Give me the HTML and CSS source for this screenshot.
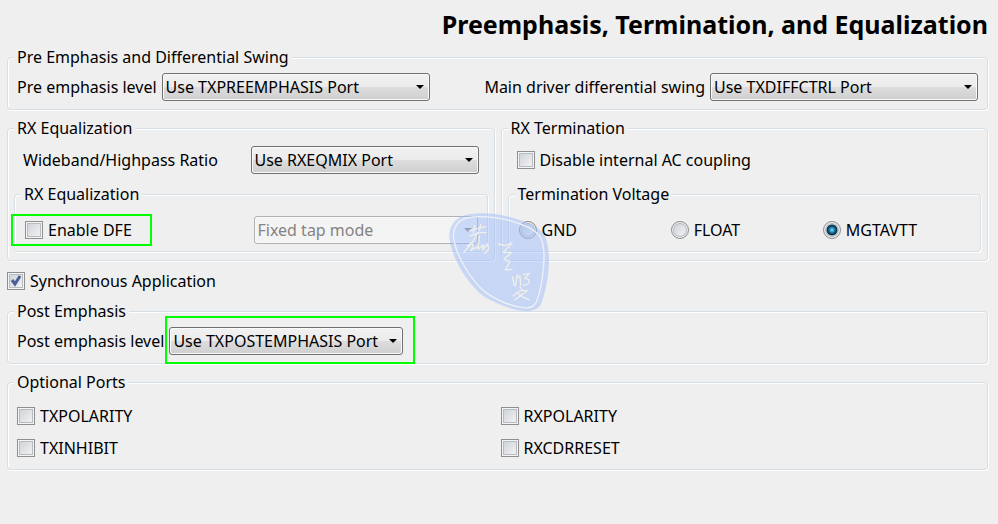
FILE: index.html
```html
<!DOCTYPE html>
<html lang="en">
<head>
  <meta charset="UTF-8" />
  <meta name="viewport" content="width=device-width, initial-scale=1.0"/>
  <title>Preemphasis, Termination, and Equalization</title>
  <link rel="stylesheet" href="styles.css">
</head>
<body>
  <form class="page">
    <h1>Preemphasis, Termination, and Equalization</h1>

    <fieldset>
      <legend>Pre Emphasis and Differential Swing</legend>
      <div class="row spread">
        <div class="field">
          <label for="preLevel">Pre emphasis level</label>
          <select id="preLevel" class="wide">
            <option>Use TXPREEMPHASIS Port</option>
          </select>
        </div>
        <div class="field">
          <label for="swing">Main driver differential swing</label>
          <select id="swing" class="wide">
            <option>Use TXDIFFCTRL Port</option>
          </select>
        </div>
      </div>
    </fieldset>

    <div class="columns">
      <fieldset class="outer">
        <legend>RX Equalization</legend>
        <div class="row spread inset">
          <label for="ratio">Wideband/Highpass Ratio</label>
          <select id="ratio" class="medium">
            <option>Use RXEQMIX Port</option>
          </select>
        </div>
        <fieldset class="inner">
          <legend>RX Equalization</legend>
          <div class="row spread">
            <label class="check marked"><input type="checkbox"> Enable DFE</label>
            <select class="narrow" aria-label="DFE mode" disabled>
              <option>Fixed tap mode</option>
            </select>
          </div>
        </fieldset>
      </fieldset>

      <fieldset class="outer">
        <legend>RX Termination</legend>
        <div class="row inset">
          <label class="check"><input type="checkbox"> Disable internal AC coupling</label>
        </div>
        <fieldset class="inner">
          <legend>Termination Voltage</legend>
          <div class="row radios">
            <label class="check"><input type="radio" name="voltage"> GND</label>
            <label class="check"><input type="radio" name="voltage"> FLOAT</label>
            <label class="check"><input type="radio" name="voltage" checked> MGTAVTT</label>
          </div>
        </fieldset>
      </fieldset>
    </div>

    <label class="check sync"><input type="checkbox" checked> Synchronous Application</label>

    <fieldset>
      <legend>Post Emphasis</legend>
      <div class="row">
        <div class="field">
          <label for="postLevel">Post emphasis level</label>
          <span class="marked-select">
            <select id="postLevel" class="post">
              <option>Use TXPOSTEMPHASIS Port</option>
            </select>
          </span>
        </div>
      </div>
    </fieldset>

    <fieldset>
      <legend>Optional Ports</legend>
      <div class="ports">
        <label class="check"><input type="checkbox"> TXPOLARITY</label>
        <label class="check"><input type="checkbox"> RXPOLARITY</label>
        <label class="check"><input type="checkbox"> TXINHIBIT</label>
        <label class="check"><input type="checkbox"> RXCDRRESET</label>
      </div>
    </fieldset>

    <!-- seal stamp -->
    <svg class="stamp" viewBox="0 0 420 375" aria-hidden="true">
      <path class="stamp-body" d="M58 108C58 80 74 56 98 48C130 36 190 38 235 50C270 58 310 72 335 94C352 112 357 150 357 185C355 235 345 280 333 312C325 330 302 335 280 333C240 328 195 310 160 288C110 250 60 165 58 108Z"/>
      <path class="stamp-line" d="M70 106C72 78 88 60 110 54C150 46 200 52 240 62C275 72 310 86 326 104C342 124 344 160 341 195C338 240 330 280 318 308C310 322 295 325 280 323C240 318 200 300 168 278C122 242 74 160 70 106Z"/>
      <g class="stamp-ink">
        <path d="M118 92L166 80M134 78L130 96M152 74L148 92M120 108L148 98L168 98M144 96C132 124 118 140 102 156M112 138L126 128L130 138L122 152L144 140M148 108L144 148L160 134L158 150L172 132L176 146L164 160"/>
        <path d="M205 132L225 137L246 129L220 157L244 158L222 178L240 184L226 210L246 208"/>
        <path d="M248 230L252 256M262 224L256 258M262 232L270 228L272 254M280 224L298 220L284 236C304 234 302 254 280 256M270 260L276 270M250 288C264 270 280 270 292 272C280 280 266 292 254 300M262 278C276 292 288 296 298 300"/>
      </g>
    </svg>
  </form>
</body>
</html>
```
FILE: styles.css
```css
body {
  margin: 0;
  background: #efefef;
  color: #000;
  font-family: "Noto Sans", Tahoma, sans-serif;
  font-size: 16px;
  line-height: 20px;
}
.page {
  position: relative;
  display: flex;
  flex-direction: column;
  gap: 8px;
  padding: 7px 10px 8px 7px;
}
h1 {
  margin: 0;
  font-size: 25px;
  line-height: 34px;
  height: 32px;
  text-align: right;
}
fieldset {
  min-width: 0;
  margin: 0;
  padding: 6px 6px 8px;
  border: 1px solid #d5dfe5;
  border-radius: 4px;
  box-shadow: inset 1px 1px 0 #fff, 1px 1px 0 #fff;
}
legend {
  padding: 0 3px;
  background: #efefef;
}
.columns {
  display: grid;
  grid-template-columns: 1fr 1fr;
  gap: 6px;
}
.outer {
  padding: 8px 6px 8px;
}
.inner {
  margin-top: 10px;
  padding: 12px 6px 7px;
}
.row {
  display: flex;
  align-items: center;
  min-height: 28px;
  padding: 0 3px;
}
.spread {
  justify-content: space-between;
}
.row.inset {
  padding: 0 9px;
}
.inner .row {
  padding: 0 3px 0 4px;
}
.field {
  display: flex;
  align-items: center;
  gap: 5px;
}
.radios {
  display: grid;
  grid-template-columns: 1fr 1fr 1fr;
  column-gap: 4px;
}
.ports {
  display: grid;
  grid-template-columns: 1fr 1fr;
  gap: 12px 6px;
  padding: 8px 3px 3px;
}
.check {
  display: flex;
  align-items: center;
  gap: 5px;
}
.sync {
  padding: 2px 0;
}

select {
  appearance: none;
  height: 28px;
  padding: 0 20px 0 3px;
  border: 1px solid #707070;
  border-radius: 3px;
  box-shadow: inset 0 0 0 1px #fafafa;
  background: url("data:image/svg+xml,%3Csvg xmlns='http://www.w3.org/2000/svg' width='10' height='5'%3E%3Cpath d='M1 0H9L5 4Z'/%3E%3C/svg%3E") no-repeat right 4px center,
    linear-gradient(#f2f2f2 0%, #ebebeb 49%, #dddddd 50%, #cfcfcf 100%);
  color: #000;
  font: inherit;
}
select:disabled {
  border-color: #adb2b5;
  background: url("data:image/svg+xml,%3Csvg xmlns='http://www.w3.org/2000/svg' width='10' height='5'%3E%3Cpath fill='%23838383' d='M1 0H9L5 4Z'/%3E%3C/svg%3E") no-repeat right 4px center #f4f4f4;
  color: #838383;
  opacity: 1;
}
.wide {
  width: 268px;
}
.medium {
  width: 228px;
}
.narrow {
  width: 224px;
}
.post {
  width: 234px;
}

input {
  appearance: none;
  flex: none;
  width: 18px;
  height: 18px;
  margin: 0;
  border: 1px solid #8e8f8f;
  box-shadow: inset 0 0 0 1px #f4f4f4, inset 0 0 0 2px #b8bcc2;
  background: linear-gradient(135deg, #cbcfd5, #f6f6f6);
}
input[type="checkbox"]:checked {
  background: url("data:image/svg+xml,%3Csvg xmlns='http://www.w3.org/2000/svg' width='16' height='16'%3E%3Cpath fill='none' stroke='%234a5f97' stroke-width='3' d='M4 7L7 11L12 3'/%3E%3C/svg%3E") no-repeat center,
    linear-gradient(135deg, #cbcfd5, #f6f6f6);
}
input[type="radio"] {
  border-radius: 50%;
}
input[type="radio"]:checked {
  background: radial-gradient(circle at 8px 8px, #7fe0fb 0, #2a9ccb 2px, #0d3f60 4px, #12344c 5px, #d8dde1 6px);
}

/* green callouts */
.marked,
.marked-select {
  position: relative;
}
.marked::after,
.marked-select::after {
  content: "";
  position: absolute;
  border: 2px solid #00ff00;
  pointer-events: none;
}
.marked::after {
  inset: -6px -20px -6px -14px;
}
.marked-select::after {
  inset: -11px -12px -9px -4px;
}

.stamp {
  position: absolute;
  left: 430px;
  top: 200px;
  width: 140px;
  height: 125px;
  pointer-events: none;
}
.stamp-body {
  fill: #a0befa;
  fill-opacity: 0.5;
}
.stamp-line,
.stamp-ink {
  fill: none;
  stroke: #eff1f4;
  stroke-width: 4;
}
.stamp-ink {
  stroke: #f0f0ea;
  stroke-linecap: round;
  stroke-linejoin: round;
}
```
